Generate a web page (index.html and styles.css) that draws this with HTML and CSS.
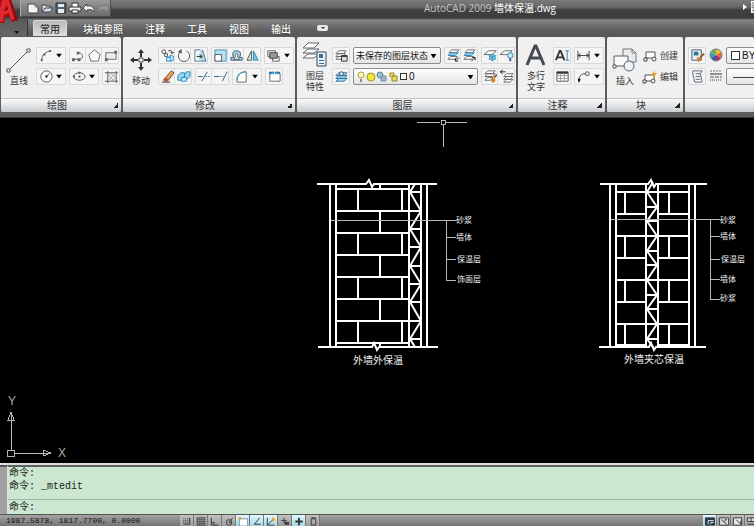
FILE: index.html
```html
<!DOCTYPE html>
<html lang="zh-CN">
<head>
<meta charset="utf-8">
<title>AutoCAD 2009 墙体保温.dwg</title>
<link rel="stylesheet" href="styles.css">
</head>
<body>
<div class="app">
<header class="chrome">
  <button class="logo" aria-label="菜单浏览器">
    <svg width="20" height="36" viewBox="0 0 20 36"><path d="M0 0h11l7 20-6 2-3-6-4 1-1 6H0z" fill="#a50d13"/><path d="M2 0h8l6 18-5 2-2-7-5 2-1 6-3 1V9z" fill="#e2282d"/><path d="M4 11l3-6 1 5z" fill="#7a0d12"/><path d="M11 0l7 20-3 1L9 0z" fill="#8c0b10"/><path d="M14 31h5l-2 3z" fill="#111"/></svg>
  </button>
  <div class="bars">
    <div class="titlebar">
      <div class="quick">
        <button aria-label="新建"><svg viewBox="0 0 14 14"><path d="M2 3h7l3 3v6H2z" fill="#f4f4f4" stroke="#444"/><path d="M9 3v3h3" fill="none" stroke="#777"/></svg></button>
        <button aria-label="打开"><svg viewBox="0 0 14 14"><path d="M2 11V4h3l1 1h4v2M2 11l3-4h8l-3 4z" fill="#d8dfe6" stroke="#36424d"/></svg></button>
        <button aria-label="保存"><svg viewBox="0 0 14 14"><path d="M2 2h10v10H2z" fill="#52606d" stroke="#29333c"/><path d="M4 3h6v3H4zM4 8h6v4H4z" fill="#e4ecf4"/></svg></button>
        <button aria-label="打印"><svg viewBox="0 0 14 14"><path d="M4 6V2h6v4" fill="#fff" stroke="#333"/><path d="M1 6h12v4H1z" fill="#eee" stroke="#333"/><path d="M4 9h6v3H4z" fill="#fff" stroke="#333"/></svg></button>
        <button aria-label="放弃"><svg viewBox="0 0 14 14"><path d="M1 7l4-4v2c5-1 8 2 7 6-1-2-3-3-7-2v2z" fill="#eee" stroke="#444"/></svg></button>
        <button aria-label="重做"><svg viewBox="0 0 14 14"><path d="M13 7L9 3v2C4 4 1 7 2 11c1-2 3-3 7-2v2z" fill="#999" stroke="#777"/></svg></button>
      </div>
      <h1 class="title">AutoCAD 2009 <span>墙体保温.dwg</span></h1>
      <div class="search"><svg width="4" height="6" viewBox="0 0 4 6"><path d="M0 0l4 3-4 3z" fill="#fff"/></svg><input aria-label="搜索" placeholder="键入关键字"></div>
    </div>
    <nav class="tabs">
      <button class="tab active">常用</button><button class="tab">块和参照</button><button class="tab">注释</button><button class="tab">工具</button><button class="tab">视图</button><button class="tab">输出</button>
      <button class="pill" aria-label="最小化功能区"><svg width="11" height="6" viewBox="0 0 11 6"><rect width="11" height="6" rx="2" fill="#e6e8ec"/><path d="M4 2h4L6 4z" fill="#333"/></svg></button>
    </nav>
  </div>
</header>

<main class="ribbon">
  <section class="panel">
    <div class="body">
      <button class="big"><svg viewBox="0 0 28 26"><path d="M4 23 23 4" stroke="#555"/><path d="M2 22h3v3H2zM22 2h3v3h-3z" fill="#fff" stroke="#555"/></svg><span>直线</span></button>
      <div class="tools">
        <div class="row">
          <div class="group"><button aria-label="圆弧"><svg viewBox="0 0 16 16"><path d="M4 13C4 7 8 4 14 3" fill="none" stroke="#555"/><path d="M3 12h2v2H3zM6 6h2v2H6zM12 2h2v2h-2z" fill="#555"/></svg></button><button class="caret" aria-label="圆弧选项"><svg viewBox="0 0 12 16"><path d="M3 6h6L6 10z"/></svg></button></div>
          <div class="group"><button aria-label="多段线"><svg viewBox="0 0 16 16"><path d="M2 12h7c5 0 4-7-1-7H7" fill="none" stroke="#555"/><path d="M1 11h3v3H1zM6 4h3v3H6zM7 11h3v3H7z" fill="#666"/></svg></button><button aria-label="正多边形"><svg viewBox="0 0 16 16"><path d="M8 2l6 5-2 7H4L2 7z" fill="#f8f8f8" stroke="#666"/></svg></button><button aria-label="矩形"><svg viewBox="0 0 16 16"><path d="M3 5h11v7H3z" fill="#eee" stroke="#666"/><path d="M12 3h3v3h-3zM2 11h3v3H2z" fill="#666"/></svg></button></div>
        </div>
        <div class="row">
          <div class="group"><button aria-label="圆"><svg viewBox="0 0 16 16"><circle cx="9" cy="8" r="6" fill="#fafafa" stroke="#555"/><path d="M9 8l3-3" stroke="#555"/><path d="M8 7h2v2H8z"/></svg></button><button class="caret" aria-label="圆选项"><svg viewBox="0 0 12 16"><path d="M3 6h6L6 10z"/></svg></button></div>
          <div class="group"><button aria-label="椭圆"><svg viewBox="0 0 16 16"><ellipse cx="9" cy="8" rx="6" ry="4" fill="none" stroke="#555"/><path d="M8 7h2v2H8zM8 3h2v2H8zM2 7h2v2H2z" fill="#555"/></svg></button><button class="caret" aria-label="椭圆选项"><svg viewBox="0 0 12 16"><path d="M3 6h6L6 10z"/></svg></button></div>
          <div class="group"><button aria-label="图案填充"><svg viewBox="0 0 16 16"><path d="M4 2v13M1 4h14M13 2v13M1 13h14" stroke="#555"/><path d="M5 8l4-4M5 12l8-8M8 13l5-5M4 6l7 7M7 4l6 6" stroke="#aaa"/></svg></button></div>
        </div>
      </div>
    </div>
    <footer><h2>绘图</h2><i></i></footer>
  </section>

  <section class="panel">
    <div class="body">
      <button class="big"><svg viewBox="0 0 28 26"><path d="M14 2l3 4h-2v4h-2V6h-2zM14 24l3-4h-2v-4h-2v4h-2zM3 13l4-3v2h4v2H7v2zM25 13l-4-3v2h-4v2h4v2z" fill="#333"/><path d="M12 11h4v4h-4z" fill="#fff" stroke="#444"/></svg><span>移动</span></button>
      <div class="tools">
        <div class="row">
          <div class="group"><button aria-label="复制"><svg viewBox="0 0 16 16"><circle cx="4" cy="4" r="2" fill="#fff" stroke="#444"/><path d="M5 6h3v3H5z" fill="#fff" stroke="#555"/><circle cx="12" cy="11" r="3" fill="#bfe6fa" stroke="#2389bd"/><path d="M7 10h4v4H7z" fill="#def" stroke="#2389bd"/><path d="M9 3c3-1 4 0 4 3M11 4l2 2 2-2" fill="none" stroke="#333"/></svg></button><button aria-label="旋转"><svg viewBox="0 0 16 16"><path d="M6 3a6 6 0 1 0 5 0" fill="none" stroke="#555"/><path d="M6 1v5L2 4z" fill="#555"/></svg></button><button aria-label="拉伸"><svg viewBox="0 0 16 16"><path d="M9 2h3l3 12H9z" fill="#a9d8ee"/><path d="M9 2H3v12h6M11 2l4 12H9" fill="none" stroke="#58788a"/><path d="M5 9h5M8 7l3 2-3 2" fill="none" stroke="#222"/></svg></button></div>
          <div class="group"><button aria-label="缩放"><svg viewBox="0 0 16 16"><path d="M2 2h12v12H2z" fill="#b5e1f5" stroke="#4a93b5"/><path d="M2 7h7v7H2z" fill="#fff" stroke="#555"/></svg></button><button aria-label="偏移"><svg viewBox="0 0 16 16"><path d="M2 13h12v-3h-3c3-4 1-7-3-7S3 6 5 10H2z" fill="#a8d6ed" stroke="#345a70"/><path d="M5 12h6L9 9c2-4-4-4-2 0z" fill="#fff" stroke="#555"/></svg></button><button aria-label="镜像"><svg viewBox="0 0 16 16"><path d="M7 3v10H2z" fill="#ddd" stroke="#555"/><path d="M9 3v10h5z" fill="#78c5e9" stroke="#298bb5"/></svg></button></div>
          <div class="group"><button aria-label="绘图次序"><svg viewBox="0 0 16 16"><path d="M2 3h8v6H2zM7 9h7v5H7z" fill="#fff" stroke="#555"/><path d="M4 5h8v6H4z" fill="#999" stroke="#444"/></svg></button><button class="caret" aria-label="次序选项"><svg viewBox="0 0 12 16"><path d="M3 6h6L6 10z"/></svg></button></div>
        </div>
        <div class="row">
          <div class="group"><button aria-label="删除"><svg viewBox="0 0 16 16"><path d="M6 9l6-7 3 2-6 8z" fill="#e2a15c" stroke="#6b4a30"/><path d="M5 9l4 3-2 2-4-2z" fill="#b9543c"/><path d="M2 14h9" stroke="#333"/></svg></button><button aria-label="分解"><svg viewBox="0 0 16 16"><path d="M2 7l3-3h4v5l-3 3H2zM9 6l2-3h4v5l-3 3H9z" fill="#9ad7f2" stroke="#2688bb"/><path d="M6 9h5v4H6z" fill="#d8f2fe" stroke="#2688bb"/></svg></button></div>
          <div class="group"><button aria-label="修剪"><svg viewBox="0 0 16 16"><path d="M1 8h5M5 13l6-10" fill="none" stroke="#345a70"/><path d="M9 8h7" stroke="#2d91c5" stroke-dasharray="2 1"/></svg></button><button aria-label="延伸"><svg viewBox="0 0 16 16"><path d="M1 8h6M10 13l5-10" stroke="#345a70"/><path d="M8 8h5" stroke="#2d91c5" stroke-dasharray="2 1"/></svg></button></div>
          <div class="group"><button aria-label="圆角"><svg viewBox="0 0 16 16"><path d="M3 14C3 7 7 3 13 3v11z" fill="#fff" stroke="#666"/><path d="M3 12C3 6 7 3 12 3" fill="none" stroke="#2d91c5"/></svg></button><button class="caret" aria-label="圆角选项"><svg viewBox="0 0 12 16"><path d="M3 6h6L6 10z"/></svg></button></div>
          <div class="group"><button aria-label="打断"><svg viewBox="0 0 16 16"><path d="M5 5H3v8h11V5h-2" fill="#fff" stroke="#666"/><path d="M2 4h4M10 4h4" stroke="#187fb5" stroke-width="2"/><path d="M6 2v4l2-2zM10 2v4L8 4z" fill="#187fb5"/></svg></button></div>
        </div>
      </div>
    </div>
    <footer><h2>修改</h2><i></i></footer>
  </section>

  <section class="panel">
    <div class="body">
      <button class="big tall"><svg viewBox="0 0 28 26"><path d="M2 16l5-4h11l-5 4zM2 11l5-4h11l-5 4zM2 6l5-5h11l-5 5z" fill="#fff" stroke="#666"/><path d="M16 10h9v14h-9z" fill="#e7f3fb" stroke="#334a5c"/><path d="M18 12h4v4h-4zM18 18h5v1h-5zM18 21h5v1h-5z" fill="#416e8e"/></svg><span>图层<br>特性</span></button>
      <div class="tools">
        <div class="row">
          <div class="group"><button aria-label="图层状态"><svg viewBox="0 0 16 16"><path d="M2 6l3-3h8l-3 3zM2 9l3-3h7l-2 3zM2 12l3-3h6l-3 3z" fill="#fff" stroke="#666"/><path d="M8 8h6v6H8z" fill="#ddd" stroke="#333"/><path d="M8 9h6" stroke="#333"/></svg></button></div>
          <span class="combo short"><select aria-label="图层状态列表"><option>未保存的图层状态</option></select><svg class="drop" viewBox="0 0 7 5"><path d="M0 0h7L4 5H3z"/></svg></span>
          <div class="group"><button aria-label="隔离图层"><svg viewBox="0 0 16 16"><path d="M3 5l3-3h8l-3 3zM2 12l3-3h7l-2 3z" fill="#fff" stroke="#666"/><path d="M2 8l4-3h7l-3 3z" fill="#8dd0f2" stroke="#2c87b7"/><path d="M14 10l-3 3M10 11v3h3" fill="none" stroke="#111"/></svg></button><button aria-label="取消隔离"><svg viewBox="0 0 16 16"><path d="M3 5l3-3h8l-3 3zM2 12l3-3h7l-2 3z" fill="#fff" stroke="#666"/><path d="M2 8l4-3h7l-3 3z" fill="#8dd0f2" stroke="#2c87b7"/><path d="M10 14l3-3M11 10h3v3" fill="none" stroke="#111"/></svg></button></div>
          <div class="group"><button aria-label="冻结图层"><svg viewBox="0 0 16 16"><path d="M1 7l5-4h8l-4 4z" fill="#fff" stroke="#666"/><circle cx="10" cy="10" r="3" fill="#d8f1fc" stroke="#218dc4"/><path d="M10 6v8M6 8l8 4M14 8l-8 4" stroke="#218dc4"/></svg></button><button aria-label="关闭图层"><svg viewBox="0 0 16 16"><path d="M1 7l5-4h8l-4 4z" fill="#fff" stroke="#666"/><circle cx="12" cy="8" r="3" fill="#c1e8fa" stroke="#2486b6"/><path d="M11 11h2v3h-2z" fill="#458"/></svg></button></div>
        </div>
        <div class="row">
          <div class="group"><button aria-label="置为当前"><svg viewBox="0 0 16 16"><path d="M2 13l3-3h9l-3 3zM2 10l3-3h9l-3 3zM2 7l3-3h9l-3 3z" fill="#9dd4ef" stroke="#3676a0"/><circle cx="8" cy="5" r="2" fill="#fff" stroke="#345"/></svg></button></div>
          <span class="combo long"><svg class="states" viewBox="0 0 42 12"><circle cx="5" cy="4" r="3" fill="#fffab8" stroke="#a99d48"/><path d="M4 8h2v3H4z" fill="#888"/><circle cx="15" cy="6" r="4" fill="#f1e63a" stroke="#a39c20"/><circle cx="24" cy="4" r="3" fill="#9bc1d4" stroke="#628297"/><path d="M25 5h5v5h-5z" fill="#9bb6ca" stroke="#7893a4"/><path d="M34 6V2h4v4M36 5h5v5h-5z" fill="#ece05b" stroke="#928424"/></svg><b></b><select aria-label="当前图层"><option>0</option></select><svg class="drop" viewBox="0 0 7 5"><path d="M0 0h7L4 5H3z"/></svg></span>
          <div class="group"><button aria-label="匹配图层"><svg viewBox="0 0 16 16"><path d="M2 5l3-3h8l-3 3zM2 8l3-3h8l-3 3zM2 12l3-3h6l-3 3z" fill="#fff" stroke="#666"/><path d="M8 10h5v3l-3 2z" fill="#d17b27"/><path d="M12 9l3-3" stroke="#974f20" stroke-width="2"/></svg></button><button aria-label="上一个图层"><svg viewBox="0 0 16 16"><path d="M5 8l3-3h7l-3 3zM5 11l3-3h7l-3 3zM5 14l3-3h7l-3 3z" fill="#fff" stroke="#666"/><path d="M2 3h5M4 1L1 3l3 2" fill="none" stroke="#222"/></svg></button></div>
        </div>
      </div>
    </div>
    <footer><h2>图层</h2><i></i></footer>
  </section>

  <section class="panel">
    <div class="body">
      <button class="big tall"><svg viewBox="0 0 28 26"><path d="M5 23L13 4h1l8 19M8 16h11" fill="none" stroke="#454a50" stroke-width="3"/></svg><span>多行<br>文字</span></button>
      <div class="tools">
        <div class="row">
          <div class="group"><button aria-label="单行文字"><svg viewBox="0 0 16 16"><path d="M1 13L5 3h1l4 10M3 10h5" fill="none" stroke="#333" stroke-width="2"/><path d="M13 3v10M11 3h4M11 13h4" stroke="#2a82b6"/></svg></button></div>
          <div class="group"><button aria-label="标注"><svg viewBox="0 0 16 16"><path d="M2 3v10M14 3v10M2 8h12M5 6L2 8l3 2M11 6l3 2-3 2" fill="none" stroke="#444"/></svg></button><button class="caret" aria-label="标注选项"><svg viewBox="0 0 12 16"><path d="M3 6h6L6 10z"/></svg></button></div>
        </div>
        <div class="row">
          <div class="group"><button aria-label="表格"><svg viewBox="0 0 16 16"><path d="M2 3h12v10H2z" fill="#fff" stroke="#555"/><path d="M2 4h12" stroke="#334" stroke-width="2"/><path d="M2 7h12M2 10h12M6 5v8M10 5v8" stroke="#999"/></svg></button></div>
          <div class="group"><button aria-label="多重引线"><svg viewBox="0 0 16 16"><path d="M3 13c0-5 2-8 7-8" fill="none" stroke="#444"/><circle cx="12" cy="5" r="2" fill="#fff" stroke="#444"/><path d="M2 10l1 5 2-4z"/></svg></button><button class="caret" aria-label="引线选项"><svg viewBox="0 0 12 16"><path d="M3 6h6L6 10z"/></svg></button></div>
        </div>
      </div>
    </div>
    <footer><h2>注释</h2><i></i></footer>
  </section>

  <section class="panel block">
    <div class="body">
      <button class="big"><svg viewBox="0 0 28 26"><path d="M12 2h9l4 4v9H12z" fill="#e8ecef" stroke="#777"/><path d="M21 2v4h4" fill="none" stroke="#777"/><path d="M3 9h14v10H3z" fill="#f7f9fa" stroke="#596068"/><circle cx="18" cy="19" r="5" fill="#eef2f5" stroke="#596068"/><path d="M2 18h3v3H2z" fill="#fff" stroke="#555"/></svg><span>插入</span></button>
      <div class="tools">
        <button class="labeled"><svg viewBox="0 0 16 16"><path d="M4 4h9v6H4z" fill="#fff" stroke="#555"/><circle cx="12" cy="11" r="2" fill="#eee" stroke="#555"/><path d="M2 10h3v3H2z" fill="#fff" stroke="#444"/></svg>创建</button>
        <button class="labeled"><svg viewBox="0 0 16 16"><path d="M3 6h9v6H3z" fill="#fff" stroke="#555"/><circle cx="11" cy="12" r="2" fill="#eee" stroke="#555"/><path d="M1 11h3v3H1z" fill="#fff" stroke="#444"/><path d="M13 1l-4 5h3l-1 4 4-6h-3z" fill="#f5a51d"/></svg>编辑</button>
      </div>
    </div>
    <footer><h2>块</h2><i></i></footer>
  </section>

  <section class="panel props">
    <div class="body">
      <div class="tools">
        <div class="row">
          <div class="group"><button aria-label="特性匹配"><svg viewBox="0 0 16 16"><path d="M2 2h10v11H2z" fill="#e6f0f7" stroke="#40576a"/><path d="M4 4h5v4H4z" fill="#39769c"/><path d="M7 10h5v3l-3 2z" fill="#d17b27"/><path d="M11 10l4-4" stroke="#974f20" stroke-width="2"/></svg></button></div>
          <svg class="glyph" viewBox="1 1 14 14"><path d="M8 8V2a6 6 0 0 1 5 3z" fill="#f3bd31"/><path d="M8 8l5-3a6 6 0 0 1 0 6z" fill="#e66b2d"/><path d="M8 8l5 3a6 6 0 0 1-5 3z" fill="#a53472"/><path d="M8 8v6a6 6 0 0 1-5-3z" fill="#3957ac"/><path d="M8 8l-5 3a6 6 0 0 1 0-6z" fill="#2e9ec3"/><path d="M8 8L3 5a6 6 0 0 1 5-3z" fill="#68b446"/><circle cx="8" cy="8" r="6" fill="none" stroke="#777"/></svg>
          <span class="combo fill"><b></b><select aria-label="颜色"><option>BYLAYER</option></select></span>
        </div>
        <div class="row">
          <div class="group"><button aria-label="特性列表"><svg viewBox="0 0 16 16"><path d="M3 2h10l-2 3 2 9H5L3 5zM6 5h5M6 8h5M6 11h5" fill="#f4f7f9" stroke="#566879"/></svg></button></div>
          <svg class="glyph" viewBox="1 1 14 14"><path d="M2 3h12" stroke="#777" stroke-dasharray="2 1"/><path d="M2 6h12" stroke="#333"/><path d="M2 9h12" stroke="#555" stroke-dasharray="4 1"/><path d="M2 12h12" stroke="#333" stroke-dasharray="1 1"/></svg>
          <span class="combo fill line"><select aria-label="线宽"><option></option></select></span>
        </div>
      </div>
    </div>
    <footer></footer>
  </section>
</main>

<div class="canvas">
<svg viewBox="0 117 754 345" preserveAspectRatio="xMinYMin meet" role="img" aria-label="墙体保温图">
  <g class="soft"><path d="M417 121h23M446 121h21M443 124v22"/><path d="M441 119h4v4h-4z"/></g>
  <g class="wall">
    <path d="M317 183h49l3-4 3 7 2-3h63M318 346h54l2-4 3 7 2-3h59"/>
    <path d="M330 183v163M336 183v163M409 183v163M421 183v163M427 183v163"/>
    <path d="M336 188h73M336 210h73M336 232h73M336 254h73M336 276h73M336 298h73M336 320h73M336 342h73"/>
    <path d="M358 188v22M402 188v22M358 232v22M402 232v22M358 276v22M402 276v22M358 320v22M402 320v22M380 183v5M380 210v22M380 254v22M380 298v22M380 342v4"/>
    <path d="M415 183l-5 8 11 19-11 18 11 18-11 19 11 18-11 18 11 19-11 18 5 8"/>
    <path d="M409 191h12M409 210h12M409 228h12M409 246h12M409 265h12M409 283h12M409 301h12M409 320h12M409 338h12"/>
    <path d="M600 183h48l3-4 3 7 2-3h51M599 346h50l2-4 3 7 2-3h50"/>
    <path d="M610 183v163M616 183v163M646 183v163M658 183v163M689 183v163M695 183v163"/>
    <path d="M616 191h30M616 213h30M616 235h30M616 257h30M616 279h30M616 301h30M616 323h30M616 344h30M658 191h31M658 213h31M658 235h31M658 257h31M658 279h31M658 301h31M658 323h31M658 344h31"/>
    <path d="M625 191v22M669 191v22M625 235v22M669 235v22M625 279v22M669 279v22M625 323v21M669 323v21"/>
    <path d="M653 181l-6 10 10 15-10 14 10 15-10 15 10 14-10 15 10 15-10 14 10 15-10 15 6 8"/>
    <path d="M646 191h12M646 206h12M646 220h12M646 235h12M646 250h12M646 264h12M646 279h12M646 294h12M646 308h12M646 323h12M646 338h12"/>
  </g>
  <g class="soft"><path d="M331 219h125M446 219v60M446 236h10M446 258h10M446 279h10M611 218h109M710 218v80M710 235h10M710 258h10M710 278h10M710 298h10"/></g>
  <g class="note">
    <text x="456" y="222">砂浆</text><text x="456" y="239">墙体</text><text x="457" y="261">保温层</text><text x="457" y="281">饰面层</text>
    <text x="720" y="222">砂浆</text><text x="720" y="238">墙体</text><text x="721" y="261">保温层</text><text x="720" y="281">墙体</text><text x="720" y="300">砂浆</text>
  </g>
  <g class="caption"><text x="353" y="363">外墙外保温</text><text x="624" y="362">外墙夹芯保温</text></g>
  <g class="soft"><path d="M7 449h7v6H7zM11 449v-38l-3 8h6l-3-8M14 452h37l-8-3v6l8-3"/></g>
  <g class="axis"><text x="8" y="404">Y</text><text x="58" y="456">X</text></g>
</svg>
</div>

<section class="command">
  <div class="grip"></div>
  <div class="console">
    <div class="history"><p>命令:</p><p>命令: _mtedit</p></div>
    <div class="prompt"><label for="cmd">命令:</label><input id="cmd"></div>
  </div>
</section>

<footer class="status">
  <span class="coords">1987.5878, 1817.7700, 0.0000</span>
  <div class="toggles">
    <button aria-label="捕捉"><svg viewBox="0 0 12 12"><path d="M2 3h7M2 5h7M2 7h7" stroke-dasharray="1 1"/><path d="M9 2v7H2"/></svg></button>
    <button aria-label="栅格"><svg viewBox="0 0 12 12"><path d="M1 2h10M1 4h10M1 6h10M1 8h10M1 10h10M2 1v10M4 1v10M6 1v10M8 1v10M10 1v10" stroke-width=".6"/></svg></button>
    <button aria-label="正交"><svg viewBox="0 0 12 12"><path d="M2 2v8h8M2 7h3v3"/></svg></button>
    <button aria-label="极轴"><svg viewBox="0 0 12 12"><circle cx="6" cy="7" r="3"/><path d="M6 7l4-5M6 7h3"/></svg></button>
    <button class="on" aria-label="对象捕捉"><svg viewBox="0 0 12 12"><path d="M2 3h9v8H2z" fill="#fff" stroke="#69a"/><path d="M1 1h3v3H1z" fill="#f0a04b" stroke="none"/></svg></button>
    <button class="on" aria-label="对象追踪"><svg viewBox="0 0 12 12"><path d="M9 2L3 9h7"/></svg></button>
    <button class="on" aria-label="动态UCS"><svg viewBox="0 0 12 12"><path d="M2 2v8h8M2 10l6-6"/><path d="M9 0L6 5h2l-1 3 4-5H9z" fill="#eb9f20" stroke="none"/></svg></button>
    <button aria-label="动态输入"><svg viewBox="0 0 12 12"><path d="M5 2v6M2 5h6"/><path d="M6 7h4v2H6z" fill="#444"/></svg></button>
    <button class="on" aria-label="线宽"><svg viewBox="0 0 12 12"><path d="M6 2v8M2 6h8" stroke-width="2"/></svg></button>
    <button aria-label="快捷特性"><svg viewBox="0 0 12 12"><path d="M4 3h5v7H4zM4 2h5"/></svg></button>
  </div>
  <div class="toggles right">
    <button class="on" aria-label="模型"><svg viewBox="0 0 12 12"><path d="M1 2h10v8H1z" fill="#253c48"/><path d="M4 9V5h6M7 9V7h3" stroke="#e7f6fb"/></svg></button>
    <button aria-label="布局"><svg viewBox="0 0 12 12"><path d="M1 2h10v8H1z" fill="#d7dadd"/><path d="M3 4l6 5M9 4H7v2"/></svg></button>
    <button aria-label="快速查看"><svg viewBox="0 0 12 12"><path d="M1 2h9v8H1z" fill="#e6e6e6"/><path d="M4 4l5 5V5"/></svg></button>
    <button aria-label="图形查看"><svg viewBox="0 0 12 12"><path d="M1 2h10v4H1zM5 2v4M1 9h10" fill="#ddd"/></svg></button>
  </div>
</footer>
</div>
</body>
</html>
```
FILE: styles.css
```css
* { box-sizing: border-box; }
body { margin: 0; font-family: "Liberation Sans", "Noto Sans CJK SC", sans-serif; font-size: 10px; color: #333; }
button, input, select { font: inherit; color: inherit; border: 0; padding: 0; margin: 0; background: none; }
button { display: flex; align-items: center; justify-content: center; }
svg { display: block; flex: none; }
h1, h2, p { margin: 0; font-size: inherit; font-weight: normal; }
.app { display: flex; flex-direction: column; height: 100vh; overflow: hidden; }

.chrome { display: flex; background: linear-gradient(#7b7b7b 0, #666 7px, #404040 10px, #3c3c3c 18px, #5a5a5a 19px, #666 100%); }
.logo { width: 20px; height: 36px; }
.bars { flex: 1; min-width: 0; }
.titlebar { display: flex; height: 19px; align-items: flex-start; }
.quick { display: flex; width: 91px; height: 17px; padding: 0 0 0 5px; background: linear-gradient(#999, #6c6c6c); border: 1px solid #4b4b4b; border-top: 0; border-left-color: #aaa; }
.quick button { width: 14px; height: 16px; }
.quick svg { width: 14px; height: 14px; }
.title { flex: 1; padding-left: 126px; text-align: center; font: 10px/17px "Open Sans", "Noto Sans CJK SC", sans-serif; color: #c4c4c4; white-space: nowrap; }
.title span { color: #fff; }
.search { display: flex; flex: none; align-items: center; gap: 4px; width: 11px; height: 14px; overflow: hidden; }
.search input { width: 60px; height: 12px; flex: none; background: #fff; }
.tabs { display: flex; align-items: center; height: 17px; margin-left: 7px; padding-left: 5px; background: linear-gradient(#858585, #606060 60%, #565656); border-left: 1px solid #333; border-top: 1px solid #777; color: #fff; }
.tab { height: 16px; padding: 0 11px; font-weight: 500; white-space: nowrap; text-shadow: 0 0 1px #222; }
.tab.active { width: 34px; padding: 0; margin-right: 5px; color: #333; text-shadow: none; background: linear-gradient(#b9b9b9, #dedede); border: 1px solid #ddd; border-bottom: 0; border-radius: 3px 3px 0 0; }
.pill { margin-left: 15px; }

.ribbon { display: flex; gap: 2px; padding: 1px 0 5px 1px; background: #5b5b5b; border-bottom: 1px solid #333; overflow: hidden; }
.panel { flex: none; display: flex; flex-direction: column; border-radius: 2px; background: #f0f0f0; overflow: hidden; }
.body { display: flex; gap: 1px; height: 61px; padding: 10px 1px 0 2px; }
.panel footer { display: flex; align-items: center; height: 14px; padding-right: 3px; background: linear-gradient(#fafafa, #c9cdd0); border-top: 1px solid #c4c4c4; }
.panel h2 { flex: 1; text-align: center; line-height: 13px; }
.panel i { width: 5px; height: 5px; background: linear-gradient(135deg, transparent 50%, #222 50%); }
.big { flex-direction: column; justify-content: flex-start; width: 32px; font-size: 9px; line-height: 11px; gap: 3px; }
.big svg { width: 28px; height: 26px; }
.tall { margin-top: -5px; }
.tools { flex: 1; display: flex; flex-direction: column; gap: 4px; }
.row { display: flex; gap: 3px; height: 17px; }
.group { display: flex; flex: none; border: 1px solid #d6d8da; border-radius: 1px; background: #f5f5f5; }
.group button { width: 16px; height: 15px; }
.group button + button { box-shadow: -1px 0 #dcdcdc; }
.group button.caret { width: 12px; box-shadow: none; }
.group svg { width: 15px; height: 15px; }
.group .caret svg { width: 12px; }
.combo { display: flex; align-items: center; gap: 2px; height: 17px; padding: 0 3px 0 2px; border: 1px solid #8d8d8d; border-radius: 2px; background: linear-gradient(#fff, #e4e4e4); }
.combo select { flex: 1; min-width: 0; height: 14px; appearance: none; color: #111; overflow: hidden; }
.combo b { flex: none; width: 7px; height: 7px; border: 1px solid #333; background: #fff; }
.short { width: 88px; }
.long { width: 125px; }
.drop { width: 7px; height: 4px; }
.states { width: 42px; height: 12px; }
.block .body { padding-right: 5px; }
.labeled { height: 17px; gap: 2px; font-size: 9px; }
.labeled svg { width: 16px; height: 16px; }
.props { flex: 1 0 68px; min-width: 68px; }
.props .body { padding-left: 3px; padding-right: 0; }
.props .tools { min-width: 0; }
.glyph { width: 14px; height: 16px; }
.fill { flex: 1; min-width: 0; margin-right: -6px; padding-left: 4px; overflow: hidden; }
.fill b { width: 9px; height: 9px; }
.fill select { flex: none; }
.line select { width: 100%; background: linear-gradient(#444, #444) 2px 7px / 100% 1px no-repeat; }
.short select { font-size: 9px; }

.canvas { flex: 1; min-height: 0; background: #000; }
.canvas svg { width: 100%; height: 100%; }
.wall path { fill: none; stroke: #fff; stroke-width: 2; }
.soft path { fill: none; stroke: #b5b5b5; stroke-width: 1; shape-rendering: crispEdges; }
.note { fill: #eee; font-size: 8px; }
.caption { fill: #eee; font-size: 10px; }
.axis { fill: #aaa; font-size: 12px; }

.command { display: flex; height: 51px; border-top: 2px solid #ddd; background: #cbe7cf; font: 10px/13px "Liberation Mono", "Noto Sans CJK SC", monospace; color: #222; }
.grip { width: 8px; background: #a0a0a0; border-top: 2px solid #555; border-right: 1px solid #ddd; }
.console { flex: 1; border-top: 2px solid #606060; }
.history { height: 33px; padding: 0 1px; border-bottom: 1px solid #9fb5a3; }
.prompt { display: flex; height: 14px; padding: 1px 1px 0; }
.prompt input { flex: 1; }
.status { display: flex; flex: none; height: 12px; overflow: hidden; background: linear-gradient(#a2a2a2, #747474); border-top: 1px solid #555; }
.coords { width: 180px; padding-left: 6px; font: 8px/12px "Liberation Mono", monospace; color: #111; white-space: pre; }
.toggles { display: flex; }
.toggles button { width: 14px; height: 12px; background: linear-gradient(#c2c2c2, #999); border: solid #777; border-width: 0 1px 0 0; }
.toggles .on { background: linear-gradient(#e4f8ff, #9fd3e6); }
.toggles svg { width: 12px; height: 11px; fill: none; stroke: #333; }
.right { margin-left: auto; margin-right: -5px; }
```
